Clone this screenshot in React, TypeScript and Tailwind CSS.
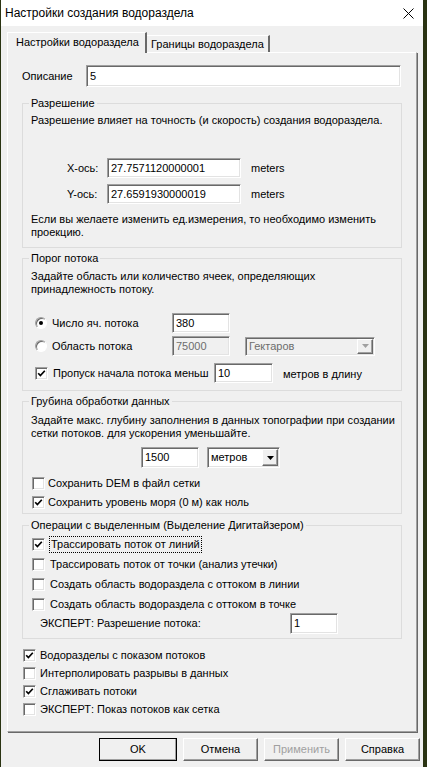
import React from "react";

const sunken =
  "border border-t-[#a0a0a0] border-l-[#a0a0a0] border-b-white border-r-white shadow-[inset_1px_1px_0_#696969,inset_-1px_-1px_0_#e3e3e3]";
const raised =
  "border border-t-white border-l-white border-b-[#696969] border-r-[#696969] shadow-[inset_-1px_-1px_0_#a0a0a0]";

function Field({
  value,
  className = "",
  disabled = false,
}: {
  value: string;
  className?: string;
  disabled?: boolean;
}) {
  return (
    <div
      className={`flex items-center pl-[3px] shrink-0 ${sunken} ${
        disabled ? "bg-[#f0f0f0] text-[#6d6d6d]" : "bg-white text-black"
      } ${className}`}
    >
      {value}
    </div>
  );
}

function Arrow({ color }: { color: string }) {
  return (
    <svg width="7" height="4" viewBox="0 0 7 4">
      <path d="M0 0 H7 L3.5 4 Z" fill={color} />
    </svg>
  );
}

function Combo({
  value,
  className = "",
  disabled = false,
}: {
  value: string;
  className?: string;
  disabled?: boolean;
}) {
  return (
    <div
      className={`flex items-stretch shrink-0 ${sunken} ${
        disabled ? "bg-[#f0f0f0] text-[#6d6d6d]" : "bg-white text-black"
      } ${className}`}
    >
      <span className="flex-1 flex items-center pl-[3px]">{value}</span>
      <span
        className={`w-[16px] m-[1px] flex items-center justify-center bg-[#f0f0f0] ${raised}`}
      >
        <Arrow color={disabled ? "#a0a0a0" : "#000"} />
      </span>
    </div>
  );
}

function Check({ checked = false }: { checked?: boolean }) {
  return (
    <span
      className={`w-[13px] h-[13px] shrink-0 bg-white flex items-center justify-center ${sunken}`}
    >
      {checked && (
        <svg width="9" height="9" viewBox="0 0 9 9">
          <path d="M1.2 4.2 L3.4 6.6 L7.8 1.8" fill="none" stroke="#000" strokeWidth="1.7" />
        </svg>
      )}
    </span>
  );
}

function Radio({ on = false }: { on?: boolean }) {
  return (
    <span className="w-[12px] h-[12px] shrink-0 rounded-full bg-white border border-t-[#a0a0a0] border-l-[#a0a0a0] border-b-white border-r-white shadow-[inset_1px_1px_0_#696969] flex items-center justify-center">
      {on && <span className="w-[4px] h-[4px] rounded-full bg-black" />}
    </span>
  );
}

function Group({
  title,
  className = "",
  children,
}: {
  title: string;
  className?: string;
  children: React.ReactNode;
}) {
  return (
    <fieldset className={`w-[380px] border border-[#dcdcdc] ${className}`}>
      <legend className="ml-[6px] px-[2px] leading-[12px]">{title}</legend>
      {children}
    </fieldset>
  );
}

function Button({
  label,
  isDefault = false,
  disabled = false,
}: {
  label: string;
  isDefault?: boolean;
  disabled?: boolean;
}) {
  return (
    <div
      className={`h-[23px] flex items-center justify-center bg-[#f0f0f0] ${
        isDefault ? "w-[78px] outline outline-1 outline-black -outline-offset-1" : "w-[75px]"
      } ${raised} ${disabled ? "text-[#a0a0a0]" : "text-black"}`}
    >
      {label}
    </div>
  );
}

export default function App() {
  return (
    <div className="w-[427px] h-[767px] bg-[#2a3312] font-['Liberation_Sans',Arial,sans-serif] text-[11px] leading-[13px] text-black overflow-hidden">
      <div className="ml-[1px] w-[422px] h-[767px] bg-[#f0f0f0] flex flex-col">
        {/* title bar */}
        <div className="h-[26px] bg-white flex items-center justify-between pl-[4px] pr-[9px] shrink-0">
          <span className="text-[12px]">Настройки создания водораздела</span>
          <svg width="11" height="11" viewBox="0 0 11 11">
            <path d="M0.5 0.5 L10.5 10.5 M10.5 0.5 L0.5 10.5" stroke="#000" strokeWidth="1" />
          </svg>
        </div>

        {/* tabs */}
        <div className="mt-[6px] ml-[6px] h-[20px] flex items-end relative z-10">
          <div className="w-[140px] h-[21px] -mb-[1px] bg-[#f0f0f0] border-l border-t border-white border-r-2 border-r-[#696969] pl-[8px] pt-[3px]">
            Настройки водораздела
          </div>
          <div className="w-[123px] h-[17px] border-t border-white border-r-2 border-r-[#696969] pl-[4px] pt-[2px]">
            Границы водораздела
          </div>
        </div>

        {/* panel */}
        <div className="ml-[6px] w-[410px] h-[680px] border-l border-t border-white border-r border-b border-r-[#a0a0a0] border-b-[#a0a0a0] shadow-[1px_1px_0_#696969] pl-[14px] flex flex-col shrink-0">
          <div className="mt-[12px] flex items-center h-[22px]">
            <span className="w-[64px]">Описание</span>
            <Field value="5" className="w-[315px] h-[22px]" />
          </div>

          <Group title="Разрешение" className="mt-[10px] h-[151px]">
            <div className="pl-[8px] mt-[5px]">
              Разрешение влияет на точность (и скорость) создания водораздела.
            </div>
            <div className="mt-[31px] flex items-center h-[20px]">
              <span className="ml-[44px] w-[40px]">X-ось:</span>
              <Field value="27.7571120000001" className="w-[134px] h-[20px]" />
              <span className="ml-[10px]">meters</span>
            </div>
            <div className="mt-[6px] flex items-center h-[20px]">
              <span className="ml-[44px] w-[40px]">Y-ось:</span>
              <Field value="27.6591930000019" className="w-[134px] h-[20px]" />
              <span className="ml-[10px]">meters</span>
            </div>
            <div className="pl-[8px] mt-[9px]">
              Если вы желаете изменить ед.измерения, то необходимо изменить
              <br />
              проекцию.
            </div>
          </Group>

          <Group title="Порог потока" className="mt-[4px] h-[139px]">
            <div className="pl-[8px] mt-[6px]">
              Задайте область или количество ячеек, определяющих
              <br />
              принадлежность потоку.
            </div>
            <div className="mt-[17px] flex items-center h-[20px]">
              <div className="ml-[12px] w-[137px] flex items-center gap-[5px]">
                <Radio on />
                <span>Число яч. потока</span>
              </div>
              <Field value="380" className="w-[58px] h-[20px]" />
            </div>
            <div className="mt-[3px] flex items-center h-[20px]">
              <div className="ml-[12px] w-[137px] flex items-center gap-[5px]">
                <Radio />
                <span>Область потока</span>
              </div>
              <Field value="75000" disabled className="w-[58px] h-[20px]" />
              <Combo value="Гектаров" disabled className="ml-[15px] w-[130px] h-[19px]" />
            </div>
            <div className="mt-[7px] flex items-center h-[20px]">
              <div className="ml-[12px] w-[179px] flex items-center gap-[5px]">
                <Check checked />
                <span>Пропуск начала потока меньш</span>
              </div>
              <Field value="10" className="w-[59px] h-[20px]" />
              <span className="ml-[10px] mt-[3px]">метров в длину</span>
            </div>
          </Group>

          <Group title="Грубина обработки данных" className="mt-[4px] h-[119px]">
            <div className="pl-[8px] mt-[7px]">
              Задайте макс. глубину заполнения в данных топографии при создании
              <br />
              сетки потоков. для ускорения уменьшайте.
            </div>
            <div className="mt-[7px] flex items-center h-[21px]">
              <Field value="1500" className="ml-[118px] w-[58px] h-[21px]" />
              <Combo value="метров" className="ml-[8px] w-[73px] h-[21px]" />
            </div>
            <div className="mt-[7px] flex items-center h-[16px] ml-[9px] gap-[3px]">
              <Check />
              <span>Сохранить DEM в файл сетки</span>
            </div>
            <div className="mt-[3px] flex items-center h-[16px] ml-[9px] gap-[3px]">
              <Check checked />
              <span>Сохранить уровень моря (0 м) как ноль</span>
            </div>
          </Group>

          <Group
            title="Операции с выделенным (Выделение Дигитайзером)"
            className="mt-[5px] h-[120px]"
          >
            <div className="mt-[4px] flex flex-col gap-[2px] ml-[9px]">
              <div className="flex items-center h-[18px] gap-[4px]">
                <Check checked />
                <span className="border border-dotted border-black px-[1px] leading-[15px]">
                  Трассировать поток от линий
                </span>
              </div>
              <div className="flex items-center h-[18px] gap-[5px]">
                <Check />
                <span>Трассировать поток от точки (анализ утечки)</span>
              </div>
              <div className="flex items-center h-[18px] gap-[5px]">
                <Check />
                <span>Создать область водораздела с оттоком в линии</span>
              </div>
              <div className="flex items-center h-[18px] gap-[5px]">
                <Check />
                <span>Создать область водораздела с оттоком в точке</span>
              </div>
            </div>
            <div className="flex items-center h-[21px]">
              <span className="ml-[17px] w-[250px]">ЭКСПЕРТ: Разрешение потока:</span>
              <Field value="1" className="w-[48px] h-[21px]" />
            </div>
          </Group>

          <div className="mt-[7px] ml-[1px] flex flex-col">
            <div className="flex items-center h-[18px] gap-[4px]">
              <Check checked />
              <span>Водоразделы с показом потоков</span>
            </div>
            <div className="flex items-center h-[18px] gap-[4px]">
              <Check />
              <span>Интерполировать разрывы в данных</span>
            </div>
            <div className="flex items-center h-[18px] gap-[4px]">
              <Check checked />
              <span>Сглаживать потоки</span>
            </div>
            <div className="flex items-center h-[18px] gap-[4px]">
              <Check />
              <span>ЭКСПЕРТ: Показ потоков как сетка</span>
            </div>
          </div>
        </div>

        {/* buttons */}
        <div className="mt-[6px] ml-[98px] flex gap-[6px]">
          <Button label="OK" isDefault />
          <Button label="Отмена" />
          <Button label="Применить" disabled />
          <Button label="Справка" />
        </div>
      </div>
    </div>
  );
}
